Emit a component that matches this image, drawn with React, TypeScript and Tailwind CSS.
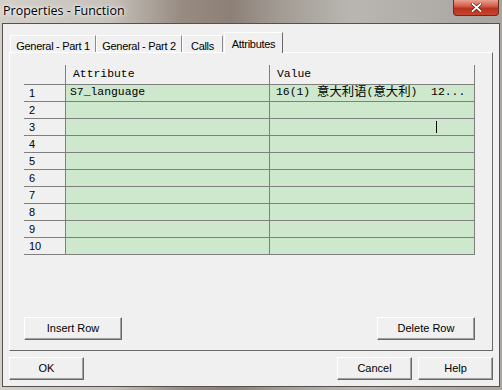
import React from 'react';

const ui = { fontFamily: '"Liberation Sans", Arial, sans-serif' };
const mono = { fontFamily: '"Liberation Mono", "Noto Sans CJK SC", monospace' };

const rows = Array.from({ length: 10 }, (_, i) => i + 1);

function Tab({ label, width, active }: { label: string; width: string; active?: boolean }) {
  if (active) {
    return (
      <div
        className={`${width} relative z-10 -mb-px ml-px flex h-[21px] items-start justify-center border-t border-l border-r border-t-white border-l-white border-r-[#6a6a6a] bg-[#f0f0f0] pt-[3px] text-[11px] tracking-[-0.3px] text-black`}
      >
        {label}
      </div>
    );
  }
  return (
    <div
      className={`${width} flex h-[17px] items-start justify-center border-t border-l border-r border-t-white border-l-white border-r-[#8a8a8a] bg-[#f0f0f0] pt-[2px] text-[11px] tracking-[-0.3px] whitespace-nowrap text-black`}
    >
      {label}
    </div>
  );
}

function Button({ label, width }: { label: string; width: string }) {
  return (
    <button
      className={`${width} flex h-[23px] items-center justify-center border border-t-white border-l-white border-r-[#696969] border-b-[#696969] bg-[#f0f0f0] text-[11px] text-black shadow-[inset_-1px_-1px_0_#a0a0a0]`}
      style={ui}
    >
      {label}
    </button>
  );
}

export default function App() {
  return (
    <div
      className="h-[390px] w-[502px] overflow-hidden bg-[linear-gradient(90deg,#d3cfc9_0%,#c6c1ba_22%,#988c82_36%,#8c8077_46%,#a39c95_56%,#b9b6b1_70%,#a8a5a1_100%)]"
      style={ui}
    >
      {/* Title bar */}
      <div className="relative flex h-[23px] items-center pl-[3px]">
        <span
          className="text-[12.5px] text-black [text-shadow:0_0_6px_#ffffff,0_0_3px_#ffffff]"
          style={{ fontFamily: '"Open Sans", "Noto Sans", sans-serif' }}
        >
          Properties - Function
        </span>
        <div className="absolute top-0 right-[3px] flex h-[16px] w-[46px] items-center justify-center rounded-b-[4px] border border-t-0 border-[#6b2a22] bg-[linear-gradient(180deg,#e8a293_0%,#d0553f_45%,#b8321f_55%,#c9452f_100%)]">
          <svg width="11" height="9" viewBox="0 0 11 9">
            <path d="M1.5 1 L9.5 8 M9.5 1 L1.5 8" stroke="#3a1a15" strokeWidth="3" strokeLinecap="square" />
            <path d="M1.5 1 L9.5 8 M9.5 1 L1.5 8" stroke="#ffffff" strokeWidth="1.8" strokeLinecap="square" />
          </svg>
        </div>
      </div>

      {/* Client area */}
      <div className="mx-[2px] h-[364px] border border-[#55524e] bg-[#f0f0f0]">
        <div className="mx-[6px] pt-[8px]">
          {/* Tabs */}
          <div className="flex h-[20px] items-end pl-px">
            <Tab label="General - Part 1" width="w-[86px]" />
            <Tab label="General - Part 2" width="w-[86px]" />
            <Tab label="Calls" width="w-[41px]" />
            <Tab label="Attributes" width="w-[59px]" active />
          </div>

          {/* Tab page */}
          <div className="h-[299px] w-[484px] border border-t-white border-l-white border-r-[#696969] border-b-[#696969] pt-[12px] pl-[14px]">
            {/* Grid */}
            <div className="w-[451px]">
              <div className="flex h-[20px]">
                <div className="h-full w-[42px] border-r border-b border-[#7f7f7f] bg-[#f0f0f0]" />
                <div className="flex h-full w-[204px] items-center border-r border-b border-[#7f7f7f] bg-[#f0f0f0] pl-[7px] text-[11.4px] text-black" style={mono}>
                  Attribute
                </div>
                <div className="flex h-full w-[205px] items-center border-r border-b border-[#7f7f7f] bg-[#f0f0f0] pl-[7px] text-[11.4px] text-black" style={mono}>
                  Value
                </div>
              </div>
              {rows.map((r) => (
                <div key={r} className="flex h-[17px]">
                  <div className="flex h-full w-[42px] items-center border-r border-b border-[#7f7f7f] bg-[#f0f0f0] pl-[5px] text-[11px] text-black">
                    {r}
                  </div>
                  <div className="flex h-full w-[204px] items-center border-r border-b border-[#7f7f7f] bg-[#cde8cd] pl-[4px] text-[11.4px] text-black" style={mono}>
                    {r === 1 ? 'S7_language' : ''}
                  </div>
                  <div className="relative flex h-full w-[205px] items-center border-r border-b border-[#7f7f7f] bg-[#cde8cd] pl-[6px] text-[11.4px] whitespace-pre text-black" style={mono}>
                    {r === 1 && (
                      <>
                        16(1) <span className="text-[12.4px]">意大利语</span>(<span className="text-[12.4px]">意大利</span>)  12...
                      </>
                    )}
                    {r === 3 && <span className="absolute top-[2px] left-[166px] h-[12px] w-px bg-black" />}
                  </div>
                </div>
              ))}
            </div>

            {/* Row buttons */}
            <div className="mt-[62px] flex w-[451px] justify-between">
              <Button label="Insert Row" width="w-[98px]" />
              <Button label="Delete Row" width="w-[98px]" />
            </div>
          </div>

          {/* Dialog buttons */}
          <div className="mt-[6px] flex w-[484px]">
            <Button label="OK" width="w-[75px]" />
            <div className="flex-1" />
            <Button label="Cancel" width="w-[75px]" />
            <div className="w-[6px]" />
            <Button label="Help" width="w-[75px]" />
          </div>
        </div>
      </div>
    </div>
  );
}
